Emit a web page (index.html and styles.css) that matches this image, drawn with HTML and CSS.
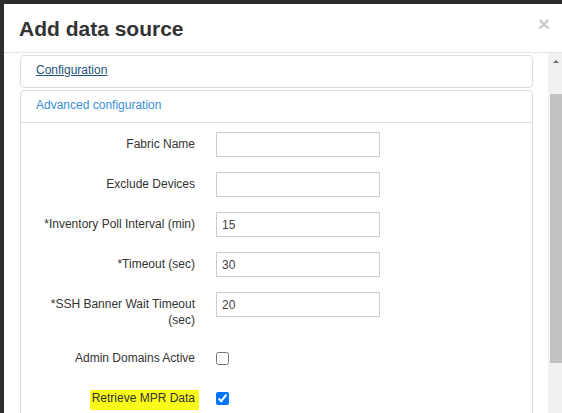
FILE: index.html
```html
<!DOCTYPE html>
<html>
<head>
<meta charset="utf-8">
<title>Add data source</title>
<link rel="stylesheet" href="styles.css">
</head>
<body>
<div class="modal">
  <div class="modal-header">
    <h4 class="modal-title">Add data source</h4>
    <span class="close">×</span>
  </div>
  <div class="modal-main">
    <div class="modal-body">
      <div class="panel">
        <div class="panel-heading"><a class="link-collapsed">Configuration</a></div>
      </div>
      <div class="panel panel-open">
        <div class="panel-heading panel-heading-open"><a class="link-open">Advanced configuration</a></div>
        <div class="panel-body">
          <div class="form-row">
            <label class="control-label">Fabric Name</label>
            <div class="control"><input class="text-input" type="text" value=""></div>
          </div>
          <div class="form-row">
            <label class="control-label">Exclude Devices</label>
            <div class="control"><input class="text-input" type="text" value=""></div>
          </div>
          <div class="form-row">
            <label class="control-label">*Inventory Poll Interval (min)</label>
            <div class="control"><input class="text-input" type="text" value="15"></div>
          </div>
          <div class="form-row">
            <label class="control-label">*Timeout (sec)</label>
            <div class="control"><input class="text-input" type="text" value="30"></div>
          </div>
          <div class="form-row">
            <label class="control-label">*SSH Banner Wait Timeout (sec)</label>
            <div class="control"><input class="text-input" type="text" value="20"></div>
          </div>
          <div class="form-row">
            <label class="control-label">Admin Domains Active</label>
            <div class="control"><input class="check" type="checkbox"></div>
          </div>
          <div class="form-row">
            <label class="control-label"><span class="highlight">Retrieve MPR Data</span></label>
            <div class="control"><input class="check" type="checkbox" checked></div>
          </div>
        </div>
      </div>
    </div>
    <div class="scrollbar">
      <div class="scroll-arrow"></div>
      <div class="scroll-thumb"></div>
    </div>
  </div>
</div>
</body>
</html>
```

FILE: styles.css
```css
html, body {
  margin: 0;
  padding: 0;
  height: 100%;
}
body {
  background: #2d2d2d;
  overflow: hidden;
  font-family: "Liberation Sans", Arial, sans-serif;
  font-size: 12px;
  line-height: 17px;
  color: #333;
}
.modal {
  margin: 4px 0 0 4px;
  width: 561px;
  height: 409px;
  background: #fff;
  display: flex;
  flex-direction: column;
}
.modal-header {
  height: 38px;
  padding: 10px 15px 0 15px;
  border-bottom: 1px solid #e5e5e5;
  display: flex;
  justify-content: space-between;
  align-items: flex-start;
}
.modal-title {
  margin: 0;
  font-size: 21px;
  line-height: 30px;
  font-weight: bold;
  color: #333;
}
.close {
  font-size: 21px;
  font-weight: bold;
  line-height: 21px;
  color: #cccccc;
  margin-top: -1px;
  margin-right: 0;
}
.modal-main {
  flex: 1;
  display: flex;
  overflow: hidden;
}
.modal-body {
  flex: 1;
  padding: 2px 15px 0 16px;
  overflow: hidden;
}
.panel {
  border: 1px solid #ddd;
  border-radius: 4px;
  margin-bottom: 2px;
}
.panel-open {
  border-bottom-left-radius: 0;
  border-bottom-right-radius: 0;
  height: 400px;
}
.panel-heading {
  padding: 6px 15px 8px 15px;
}
.panel-heading-open {
  border-bottom: 1px solid #ddd;
}
.link-collapsed {
  color: #23527c;
  text-decoration: underline;
}
.link-open {
  color: #3a8fd3;
}
.panel-body {
  padding-top: 9px;
}
.form-row {
  display: grid;
  grid-template-columns: 174px 164px;
  column-gap: 21px;
  align-items: start;
  margin-bottom: 15px;
  min-height: 25px;
}
.control-label {
  text-align: right;
  padding-top: 4px;
  padding-bottom: 3px;
  line-height: 16px;
}
.control {
  height: 25px;
}
.text-input {
  box-sizing: border-box;
  width: 164px;
  height: 25px;
  margin: 0;
  border: 1px solid #ccc;
  border-radius: 0;
  padding: 0 5px;
  font-family: "Liberation Sans", Arial, sans-serif;
  font-size: 12px;
  color: #444;
  outline: none;
}
.check {
  width: 13px;
  height: 13px;
  margin: 6px 0 0 0;
}
.highlight {
  background: #fbfb1a;
  padding: 1px 4px 5px 2px;
  margin-right: -4px;
}
.scrollbar {
  width: 17px;
  background: #f1f1f1;
  display: flex;
  flex-direction: column;
  align-items: flex-start;
}
.scroll-arrow {
  margin: 7px 0 0 5px;
  width: 0;
  height: 0;
  border-left: 3px solid transparent;
  border-right: 3px solid transparent;
  border-bottom: 3px solid #6e6e6e;
}
.scroll-thumb {
  margin: 31px 0 0 2px;
  width: 13px;
  height: 269px;
  background: #c1c1c1;
}
```
